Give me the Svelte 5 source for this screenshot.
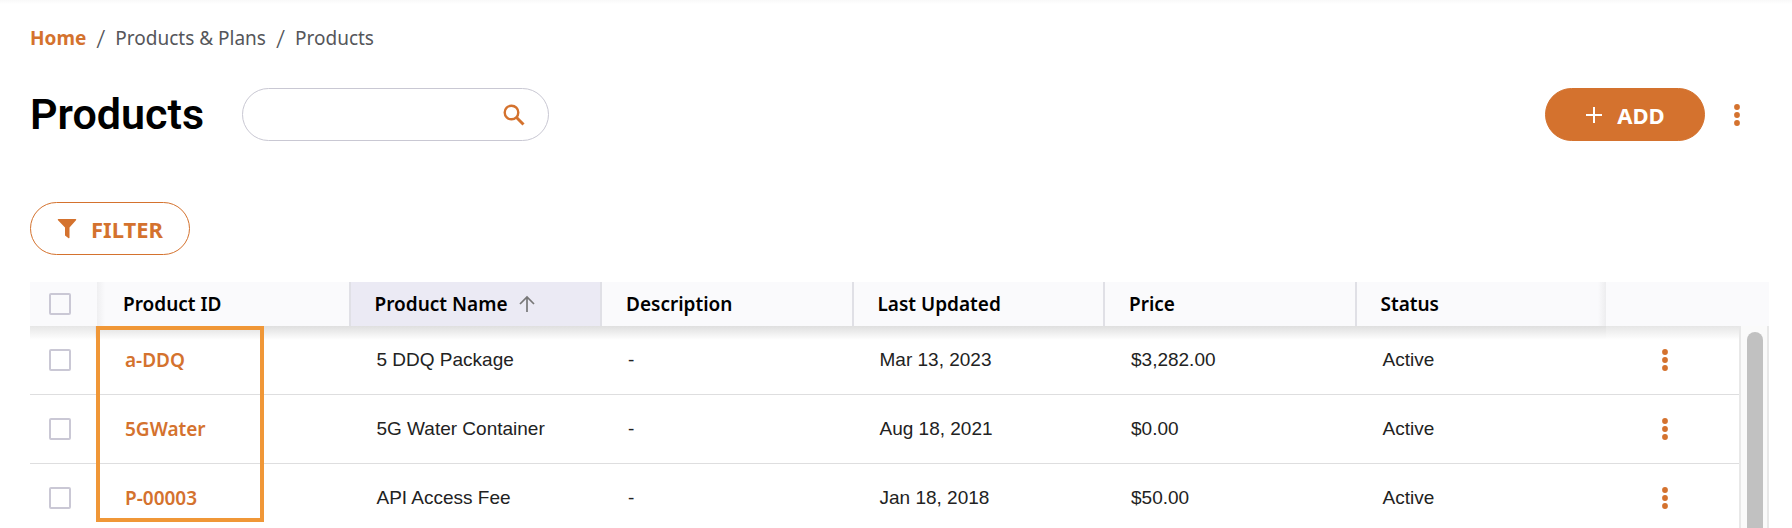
<script lang="ts">
	type Product = {
		id: string;
		name: string;
		description: string;
		updated: string;
		price: string;
		status: string;
	};

	const columns = ['Product ID', 'Product Name', 'Description', 'Last Updated', 'Price', 'Status'];

	const products: Product[] = [
		{
			id: 'a-DDQ',
			name: '5 DDQ Package',
			description: '-',
			updated: 'Mar 13, 2023',
			price: '$3,282.00',
			status: 'Active'
		},
		{
			id: '5GWater',
			name: '5G Water Container',
			description: '-',
			updated: 'Aug 18, 2021',
			price: '$0.00',
			status: 'Active'
		},
		{
			id: 'P-00003',
			name: 'API Access Fee',
			description: '-',
			updated: 'Jan 18, 2018',
			price: '$50.00',
			status: 'Active'
		}
	];

	let search = $state('');
	let sortBy = $state('Product Name');
	let selected: string[] = $state([]);

	function toggleAll() {
		selected = selected.length === products.length ? [] : products.map((p) => p.id);
	}
</script>

{#snippet dots()}
	<svg width="8" height="24" viewBox="0 0 8 24" fill="currentColor" aria-hidden="true">
		<circle cx="4" cy="4" r="2.9" />
		<circle cx="4" cy="12" r="2.9" />
		<circle cx="4" cy="20" r="2.9" />
	</svg>
{/snippet}

<main>
	<nav aria-label="Breadcrumb">
		<a href="#home">Home</a>
		<span class="slash">/</span>
		<span>Products &amp; Plans</span>
		<span class="slash">/</span>
		<span>Products</span>
	</nav>

	<header>
		<h1>Products</h1>
		<form class="search" role="search" onsubmit={(e) => e.preventDefault()}>
			<input type="text" aria-label="Search products" bind:value={search} />
			<button class="icon" aria-label="Search">
				<svg width="22" height="22" viewBox="0 0 22 22" fill="none" stroke="currentColor">
					<circle cx="8.5" cy="8.5" r="6.8" stroke-width="2.4" />
					<path d="M13.3 13.3l7.2 7.2" stroke-width="3" />
				</svg>
			</button>
		</form>
		<button class="pill add">
			<svg width="18" height="18" viewBox="0 0 18 18" fill="none" stroke="currentColor">
				<path d="M9 1v16M1 9h16" stroke-width="2" />
			</svg>
			ADD
		</button>
		<button class="icon more" aria-label="More actions">{@render dots()}</button>
	</header>

	<button class="pill filter">
		<svg width="20" height="20" viewBox="0 0 20 20" fill="currentColor">
			<path d="M1.5 0h17q1.3 0 .5 1.2L12.500 8.500v10q0 1.200-1.200.6L8 16.600V8.500L1 1.200Q.2 0 1.500 0z" />
		</svg>
		FILTER
	</button>

	<div class="grid">
		<table>
			<colgroup>
				<col class="check" />
				{#each columns as column (column)}
					<col />
				{/each}
				<col class="actions" />
			</colgroup>
			<thead>
				<tr>
					<th class="check">
						<input
							type="checkbox"
							aria-label="Select all"
							checked={selected.length === products.length}
							onchange={toggleAll}
						/>
					</th>
					{#each columns as column (column)}
						<th class="data" class:sorted={column === sortBy}>
							<button class="sort" onclick={() => (sortBy = column)}>
								{column}
								{#if column === sortBy}
									<svg width="16" height="18" viewBox="0 0 16 18" fill="none" stroke="#777">
										<path d="M8 17V2M1 9l7-7 7 7" stroke-width="1.7" />
									</svg>
								{/if}
							</button>
						</th>
					{/each}
					<th class="actions"></th>
				</tr>
			</thead>
			<tbody>
				{#each products as product (product.id)}
					<tr>
						<td class="check">
							<input
								type="checkbox"
								aria-label="Select {product.id}"
								value={product.id}
								bind:group={selected}
							/>
						</td>
						<td><a href="#{product.id}">{product.id}</a></td>
						<td>{product.name}</td>
						<td>{product.description}</td>
						<td>{product.updated}</td>
						<td>{product.price}</td>
						<td>{product.status}</td>
						<td class="actions">
							<button class="icon" aria-label="Actions for {product.id}">{@render dots()}</button>
						</td>
					</tr>
				{/each}
			</tbody>
		</table>

		<div class="highlight"></div>
		<div class="scrollbar"><div class="thumb"></div></div>
	</div>
</main>

<style>
	:global(body) {
		background: #fff;
	}

	main {
		--orange: #d4722e;
		display: flex;
		flex-direction: column;
		align-items: stretch;
		box-sizing: border-box;
		height: 100vh;
		padding: 24px 23px 0 30px;
		overflow: hidden;
		font-family: 'Noto Sans', sans-serif;
		font-size: 19px;
		background: linear-gradient(#f9f9f9, #fff 4px);
	}

	a {
		color: var(--orange);
		font-weight: 600;
		text-decoration: none;
	}

	nav {
		display: flex;
		align-items: center;
		gap: 10px;
		height: 28px;
		color: #55565a;
	}

	nav a {
		font-weight: 700;
	}

	.slash {
		font-size: 26px;
		line-height: 28px;
		font-weight: 300;
	}

	button {
		padding: 0;
		border: 0;
		background: none;
		font: inherit;
		color: inherit;
		cursor: pointer;
	}

	svg {
		display: block;
	}

	header {
		display: flex;
		align-items: center;
		margin-top: 36px;
		padding-right: 20px;
	}

	h1 {
		margin: 0 38px 0 0;
		font-family: Roboto, sans-serif;
		font-size: 43px;
		line-height: 53px;
		font-weight: 600;
		color: #000;
	}

	.search {
		display: flex;
		align-items: center;
		box-sizing: border-box;
		width: 307px;
		height: 53px;
		padding: 0 22px;
		border: 1px solid #c9c8d3;
		border-radius: 27px;
	}

	.search input {
		flex: 1;
		min-width: 0;
		border: 0;
		outline: none;
		background: none;
		font: inherit;
	}

	.icon {
		display: flex;
		align-items: center;
		justify-content: center;
		width: 24px;
		height: 24px;
		color: var(--orange);
	}

	.pill {
		display: flex;
		align-items: center;
		justify-content: center;
		gap: 14px;
		box-sizing: border-box;
		width: 160px;
		height: 53px;
		border: 1px solid var(--orange);
		border-radius: 27px;
		font-size: 22px;
		font-weight: 700;
	}

	.add {
		margin-left: auto;
		background: var(--orange);
		color: #fff;
	}

	.more {
		margin-left: 20px;
	}

	.filter {
		margin-top: 61px;
		flex: none;
		color: var(--orange);
	}

	.grid {
		position: relative;
		flex: 1;
		min-height: 0;
		margin-top: 27px;
		overflow: hidden;
	}

	table {
		width: 100%;
		table-layout: fixed;
		border-collapse: separate;
		border-spacing: 0;
	}

	col.check {
		width: 67px;
	}

	col.actions {
		width: 163px;
	}

	th,
	td {
		box-sizing: border-box;
		padding: 0 0 0 28px;
		text-align: left;
		white-space: nowrap;
	}

	th {
		position: relative;
		height: 44px;
		padding-left: 26px;
		background: #fafafc;
		color: #000;
		font-weight: 600;
	}

	/* shadow that the header drops on the rows */
	th::after {
		content: '';
		position: absolute;
		top: 100%;
		left: -2px;
		right: 0;
		height: 14px;
		background: linear-gradient(#dfdfdf, #e8e8e8 4px, rgba(255, 255, 255, 0));
		pointer-events: none;
	}

	th.check::after,
	th.actions::after {
		left: 0;
		background: linear-gradient(#e6e6e6, rgba(255, 255, 255, 0));
	}

	th.data + th.data {
		padding-left: 24px;
		border-left: 2px solid #e0e0e6;
	}

	th.check + th.data {
		background: linear-gradient(to right, #efeff1, #fafafc 8px);
	}

	th.data:nth-last-child(2) {
		background: linear-gradient(to left, #ededef, #fafafc 8px);
	}

	th.sorted {
		background: #ebeaf4;
	}

	.sort {
		display: flex;
		align-items: center;
		gap: 11px;
	}

	td {
		height: 69px;
		border-bottom: 1px solid #dededf;
		font-family: 'Liberation Sans', Arial, sans-serif;
		color: #222;
	}

	td a {
		font-family: 'Noto Sans', sans-serif;
	}

	th.check,
	td.check {
		padding-left: 19px;
	}

	td.actions {
		padding-left: 47px;
	}

	input[type='checkbox'] {
		display: block;
		appearance: none;
		box-sizing: border-box;
		width: 22px;
		height: 22px;
		margin: 0;
		border: 2px solid #cac8d5;
		border-radius: 2px;
		background: #fff;
	}

	th input[type='checkbox'] {
		background: #fafafc;
	}

	input[type='checkbox']:checked {
		background: var(--orange);
		border-color: var(--orange);
	}

	.highlight {
		position: absolute;
		top: 44px;
		left: 66px;
		box-sizing: border-box;
		width: 168px;
		height: 196px;
		border: 4px solid #f09737;
		pointer-events: none;
	}

	.scrollbar {
		position: absolute;
		top: 44px;
		right: 0;
		bottom: 0;
		box-sizing: border-box;
		width: 30px;
		padding: 6px 4px 0 6px;
		border: solid #e8e8e8;
		border-width: 0 2px;
		background: #fafafa;
	}

	.thumb {
		width: 16px;
		height: 100%;
		border-radius: 8px 8px 0 0;
		background: #c1c1c1;
	}
</style>
